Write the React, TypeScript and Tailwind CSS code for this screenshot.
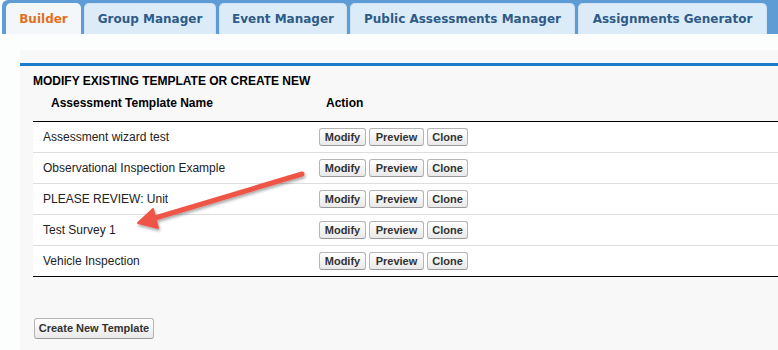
import React from 'react';

const tabs = [
  { label: 'Builder', w: 'w-[75px]', active: true },
  { label: 'Group Manager', w: 'w-[132px]' },
  { label: 'Event Manager', w: 'w-[128px]' },
  { label: 'Public Assessments Manager', w: 'w-[225px]' },
  { label: 'Assignments Generator', w: 'w-[189px]' },
];

const templates = [
  'Assessment wizard test',
  'Observational Inspection Example',
  'PLEASE REVIEW: Unit',
  'Test Survey 1',
  'Vehicle Inspection',
];

const btn =
  'h-[18px] rounded-[3px] border border-[#b5b5b5] border-b-[#9a9a9a] bg-gradient-to-b from-white to-[#e9e9e9] text-[11px] font-bold text-[#333] leading-none flex items-center justify-center';

const App: React.FC = () => {
  return (
    <div className="relative w-[778px] h-[350px] overflow-hidden bg-[#fcfefe] font-['Liberation_Sans',Arial,sans-serif] text-[#222]">
      {/* tab strip */}
      <div className="ml-[2px] h-[34px] bg-[#5d9cd4] rounded-tl-[6px] pl-[4px] pt-[3px] flex gap-[3px]">
        {tabs.map((t) => (
          <div
            key={t.label}
            className={`${t.w} shrink-0 h-[31px] rounded-t-[5px] flex items-center justify-center font-['DejaVu_Sans',sans-serif] text-[12px] font-bold ${
              t.active
                ? 'bg-[#f4f7fa] text-[#e2701d]'
                : 'bg-[#dcebf8] text-[#2e5b88] border-t border-x border-[#cfe2f3]'
            }`}
          >
            {t.label}
          </div>
        ))}
      </div>

      {/* page block */}
      <div className="ml-[20px] mt-[16px] h-[300px] bg-[#f8f8f8] rounded-tl-[3px] pt-[13px]">
        <div className="border-t-[3px] border-[#1a7bcb]">
          <div className="pl-[13px] pt-[8px] text-[12px] leading-[14px] font-bold text-black">
            MODIFY EXISTING TEMPLATE OR CREATE NEW
          </div>

          <div className="ml-[13px]">
            <div className="flex pt-[8px] pb-[11px] border-b border-black text-[12px] leading-[14px] font-bold text-black">
              <div className="w-[286px] pl-[18px]">Assessment Template Name</div>
              <div className="pl-[7px]">Action</div>
            </div>
            {templates.map((name, i) => (
              <div
                key={name}
                className={`flex items-center h-[31px] bg-white border-b ${
                  i === templates.length - 1 ? 'border-black' : 'border-[#dedede]'
                }`}
              >
                <div className="w-[286px] pl-[10px] text-[12px]">{name}</div>
                <div className="flex gap-[3px]">
                  <button className={`${btn} w-[47px]`}>Modify</button>
                  <button className={`${btn} w-[55px]`}>Preview</button>
                  <button className={`${btn} w-[41px]`}>Clone</button>
                </div>
              </div>
            ))}
          </div>

          <div className="pl-[14px] pt-[41px]">
            <button className={`${btn} h-[21px] w-[120px]`}>Create New Template</button>
          </div>
        </div>
      </div>

      {/* annotation arrow */}
      <svg className="absolute left-0 top-0 pointer-events-none" width="778" height="350">
        <defs>
          <filter id="sh" x="-10%" y="-30%" width="120%" height="160%">
            <feDropShadow dx="1" dy="2" stdDeviation="1.5" floodColor="#000" floodOpacity="0.35" />
          </filter>
        </defs>
        <g filter="url(#sh)" fill="#ef5547" stroke="#ef5547">
          <line x1="302" y1="174" x2="155" y2="218" strokeWidth="5" strokeLinecap="round" />
          <polygon points="138,223 153,209 158,228" strokeWidth="2" strokeLinejoin="round" />
        </g>
      </svg>
    </div>
  );
};

export default App;
